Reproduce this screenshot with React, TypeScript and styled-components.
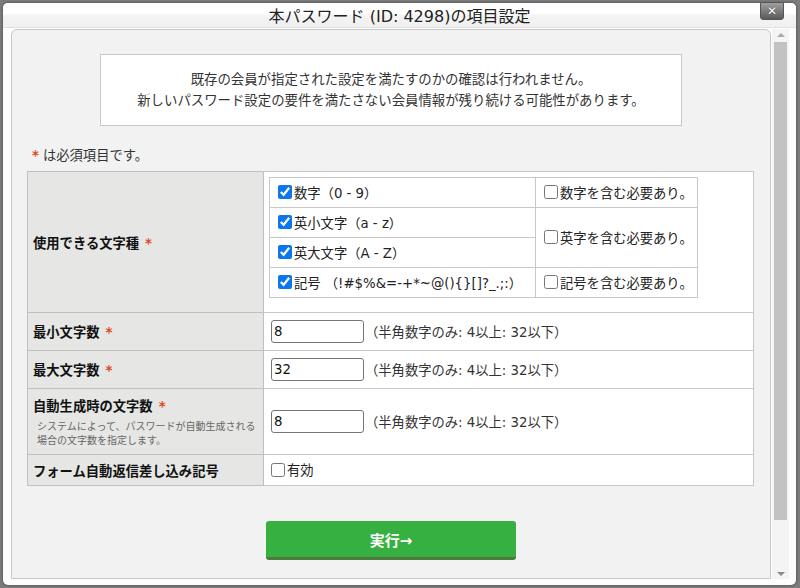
import React from 'react';
import styled, {createGlobalStyle} from 'styled-components';

const GlobalStyle = createGlobalStyle`
  html, body {
    margin: 0;
    padding: 0;
    background: #7c7c7c;
    font-family: "DejaVu Sans", "Noto Sans CJK JP", sans-serif;
    color: #222;
  }
`;

const Backdrop = styled.div`
  width: 800px;
  height: 588px;
  box-sizing: border-box;
  padding: 3px 4px 3px 3px;
  background: #7c7c7c;
`;

const Modal = styled.div`
  position: relative;
  height: 100%;
  display: flex;
  flex-direction: column;
  background: #fdfdfd;
  border-radius: 5px;
  box-shadow: 0 0 3px rgba(0, 0, 0, 0.5);
`;

const Header = styled.div`
  height: 24px;
  display: flex;
  align-items: center;
  justify-content: center;
  font-size: 16px;
  color: #222;
  border-radius: 5px 5px 0 0;
  background: linear-gradient(to bottom, #fff 0, #fff 45%, #f4f4f4 50%, #f0f0f0 100%);
  border-bottom: 1px solid #e0e0e0;
`;

const CloseButton = styled.div`
  position: absolute;
  top: -1px;
  right: 12px;
  width: 22px;
  height: 16px;
  display: flex;
  align-items: center;
  justify-content: center;
  border: 1px solid #555;
  border-radius: 0 0 3px 3px;
  background: linear-gradient(to bottom, #a0a0a0, #5a5a5a);
  color: #fff;
  font-family: "DejaVu Sans", sans-serif;
  font-weight: bold;
  font-size: 12px;
  line-height: 1;
  text-shadow: 0 0 1px #222;
`;

const Body = styled.div`
  flex: 1;
  min-height: 0;
  display: flex;
  padding: 1px 7px 6px 8px;
`;

const Panel = styled.div`
  flex: 1;
  min-width: 0;
  overflow: hidden;
  background: #f2f2f2;
  border: 1px solid #c8c8c8;
  border-radius: 6px 6px 0 0;
  display: flex;
  flex-direction: column;
`;

const Scrollbar = styled.div`
  width: 17px;
  margin-left: 1px;
  display: flex;
  flex-direction: column;
  align-items: center;
  background: #f4f4f4;
`;

const Arrow = styled.div<{$down?: boolean}>`
  height: 11px;
  width: 100%;
  display: flex;
  align-items: center;
  justify-content: center;
  &::before {
    content: '';
    border-left: 4px solid transparent;
    border-right: 4px solid transparent;
    ${p => (p.$down ? 'border-top: 4px solid #8a8a8a;' : 'border-bottom: 4px solid #a8a8a8;')}
  }
`;

const Track = styled.div`
  flex: 1;
  width: 13px;
  padding: 2px 0 48px;
  display: flex;
`;

const Thumb = styled.div`
  flex: 1;
  background: #c2c2c2;
`;

const Notice = styled.div`
  align-self: center;
  width: 580px;
  margin-top: 24px;
  padding: 14px 0;
  background: #fff;
  border: 1px solid #c8c8c8;
  text-align: center;
  font-size: 13.4px;
  line-height: 21px;
  color: #333;
`;

const RequiredNote = styled.div`
  margin: 21px 0 0 20px;
  font-size: 13.3px;
  line-height: 18px;
  color: #333;
`;

const Mark = styled.span<{$gap?: number}>`
  color: #e0461e;
  font-weight: bold;
  margin: 0 ${p => p.$gap ?? 0}px 0 ${p => (p.$gap ? 0 : 6)}px;
`;

const FormTable = styled.table`
  margin: 6px 16px 0 15px;
  border-collapse: collapse;
  border: 1px solid #c0c0c0;
  font-size: 13.3px;
`;

const LabelCell = styled.th<{$height: number}>`
  width: 236px;
  height: ${p => p.$height}px;
  box-sizing: border-box;
  padding: 0 5px;
  background: #e6e7e5;
  border: 1px solid #c0c0c0;
  text-align: left;
  vertical-align: middle;
  font-weight: bold;
  color: #111;
  white-space: nowrap;
`;

const ValueCell = styled.td<{$top?: boolean}>`
  background: #fff;
  border: 1px solid #c8c8c8;
  padding: ${p => (p.$top ? '5px 6px 10px 5px' : '0 7px')};
  vertical-align: ${p => (p.$top ? 'top' : 'middle')};
`;

const SubText = styled.div`
  margin: 5px 0 0 4px;
  font-size: 10px;
  line-height: 14px;
  font-weight: normal;
  color: #666;
`;

const TypeTable = styled.table`
  width: 429px;
  border-collapse: collapse;
  border: 1px solid #c8c8c8;
`;

const TypeCell = styled.td<{$width?: number}>`
  height: 30px;
  box-sizing: border-box;
  width: ${p => (p.$width ? `${p.$width}px` : 'auto')};
  padding: 0 4px;
  border: 1px solid #c8c8c8;
  vertical-align: middle;
  white-space: nowrap;
  color: #222;
`;

const CheckLabel = styled.label`
  display: inline-flex;
  align-items: center;
  color: #222;
`;

const Box = styled.input<{$flush?: boolean}>`
  width: 14px;
  height: 14px;
  margin: 0 2px 0 ${p => (p.$flush ? 0 : 4)}px;
  accent-color: #0b76f0;
`;

const FieldLine = styled.div`
  display: flex;
  align-items: center;
`;

const NumberInput = styled.input`
  width: 93px;
  height: 23px;
  box-sizing: border-box;
  padding: 1px 2px;
  border: 1px solid #767676;
  border-radius: 3px;
  font-family: inherit;
  font-size: 13.3px;
  color: #111;
`;

const Hint = styled.span`
  margin-left: 1px;
  color: #333;
`;

const SubmitButton = styled.button`
  align-self: center;
  margin-top: 35px;
  width: 250px;
  height: 39px;
  flex-shrink: 0;
  border: none;
  border-bottom: 3px solid #4d7a3d;
  border-radius: 3px;
  background: #36b041;
  color: #fff;
  font-family: inherit;
  font-size: 15px;
  font-weight: bold;
`;

const hint = '（半角数字のみ: 4以上: 32以下）';

function Check({label, checked, flush}: {label: string; checked?: boolean; flush?: boolean}) {
  return (
    <CheckLabel>
      <Box type="checkbox" defaultChecked={checked} $flush={flush} />
      {label}
    </CheckLabel>
  );
}

function NumberField({value}: {value: string}) {
  return (
    <FieldLine>
      <NumberInput type="text" defaultValue={value} />
      <Hint>{hint}</Hint>
    </FieldLine>
  );
}

export default function App() {
  return (
    <Backdrop>
      <GlobalStyle />
      <Modal>
        <Header>本パスワード (ID: 4298)の項目設定</Header>
        <CloseButton>✕</CloseButton>
        <Body>
          <Panel>
            <Notice>
              既存の会員が指定された設定を満たすのかの確認は行われません。
              <br />
              新しいパスワード設定の要件を満たさない会員情報が残り続ける可能性があります。
            </Notice>

            <RequiredNote>
              <Mark $gap={4}>*</Mark>は必須項目です。
            </RequiredNote>

            <FormTable>
              <tbody>
                <tr>
                  <LabelCell $height={141}>
                    使用できる文字種<Mark>*</Mark>
                  </LabelCell>
                  <ValueCell $top>
                    <TypeTable>
                      <tbody>
                        <tr>
                          <TypeCell $width={266}>
                            <Check label="数字（0 - 9）" checked />
                          </TypeCell>
                          <TypeCell>
                            <Check label="数字を含む必要あり。" />
                          </TypeCell>
                        </tr>
                        <tr>
                          <TypeCell>
                            <Check label="英小文字（a - z）" checked />
                          </TypeCell>
                          <TypeCell rowSpan={2}>
                            <Check label="英字を含む必要あり。" />
                          </TypeCell>
                        </tr>
                        <tr>
                          <TypeCell>
                            <Check label="英大文字（A - Z）" checked />
                          </TypeCell>
                        </tr>
                        <tr>
                          <TypeCell>
                            <Check label="記号 （!#$%&=-+*~@(){}[]?_.;:）" checked />
                          </TypeCell>
                          <TypeCell>
                            <Check label="記号を含む必要あり。" />
                          </TypeCell>
                        </tr>
                      </tbody>
                    </TypeTable>
                  </ValueCell>
                </tr>
                <tr>
                  <LabelCell $height={38}>
                    最小文字数<Mark>*</Mark>
                  </LabelCell>
                  <ValueCell>
                    <NumberField value="8" />
                  </ValueCell>
                </tr>
                <tr>
                  <LabelCell $height={38}>
                    最大文字数<Mark>*</Mark>
                  </LabelCell>
                  <ValueCell>
                    <NumberField value="32" />
                  </ValueCell>
                </tr>
                <tr>
                  <LabelCell $height={66}>
                    自動生成時の文字数<Mark>*</Mark>
                    <SubText>
                      システムによって、パスワードが自動生成される
                      <br />
                      場合の文字数を指定します。
                    </SubText>
                  </LabelCell>
                  <ValueCell>
                    <NumberField value="8" />
                  </ValueCell>
                </tr>
                <tr>
                  <LabelCell $height={31}>フォーム自動返信差し込み記号</LabelCell>
                  <ValueCell>
                    <Check label="有効" flush />
                  </ValueCell>
                </tr>
              </tbody>
            </FormTable>

            <SubmitButton type="button">実行→</SubmitButton>
          </Panel>
          <Scrollbar>
            <Arrow />
            <Track>
              <Thumb />
            </Track>
            <Arrow $down />
          </Scrollbar>
        </Body>
      </Modal>
    </Backdrop>
  );
}
